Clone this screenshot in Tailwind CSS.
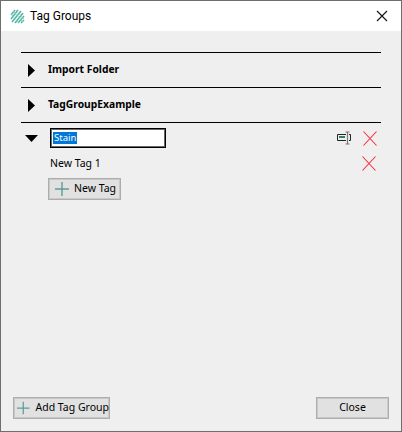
<!DOCTYPE html>
<html lang="en">
<head>
  <meta charset="UTF-8">
  <title>Tag Groups</title>
  <script src="https://cdn.jsdelivr.net/npm/@tailwindcss/browser@4"></script>
</head>
<body class="bg-[#efefef]">
  <div class="w-[402px] h-[432px] flex flex-col border border-[#6e6e6e] font-['Noto_Sans',sans-serif] text-[11px] text-black overflow-hidden">
    <!-- Title bar -->
    <div class="h-[30px] shrink-0 bg-white flex items-center pl-[9px] pr-[13px]">
      <svg class="w-[15px] h-[15px] mr-[5px]" viewBox="0 0 15 15" fill="none" stroke="#4fb3a0" stroke-width="1.5">
        <path d="M1 6 L5 1 M1 10 L8 1 M2 13 L11 2 M5 14 L13 4 M8 14 L14 7 M11 14 L14 11"/>
        <path d="M3 2 L13 13 M6 1 L14 10 M1 5 L9 14" stroke="#8fd3c5" stroke-width="0.8"/>
      </svg>
      <span class="text-[12px] font-['Roboto',sans-serif] flex-1">Tag Groups</span>
      <svg class="w-[12px] h-[12px]" viewBox="0 0 12 12" stroke="#111" stroke-width="1.1"><path d="M1 1 L11 11 M11 1 L1 11"/></svg>
    </div>

    <!-- Body -->
    <div class="flex-1 flex flex-col px-[20px] pt-[21px] pb-[12px]">
      <div class="flex-1">
        <div class="h-[35px] border-t border-black flex items-center pl-[7px]">
          <svg class="w-[7px] h-[13px] mr-[13px]" viewBox="0 0 7 13"><path d="M0 0 L7 6.5 L0 13 Z"/></svg>
          <span class="font-bold text-[10.3px]">Import Folder</span>
        </div>
        <div class="h-[35px] border-t border-black flex items-center pl-[7px]">
          <svg class="w-[7px] h-[13px] mr-[13px]" viewBox="0 0 7 13"><path d="M0 0 L7 6.5 L0 13 Z"/></svg>
          <span class="font-bold text-[10.3px]">TagGroupExample</span>
        </div>
        <div class="border-t border-black">
          <!-- Expanded group -->
          <div class="flex items-center h-[30px] pl-[4px]">
            <svg class="w-[13px] h-[7px] mr-[12px]" viewBox="0 0 13 7"><path d="M0 0 L13 0 L6.5 7 Z"/></svg>
            <div class="w-[116px] h-[20px] border border-black shadow-[inset_0_0_0_1px_#666] bg-white flex items-center pl-[2px]">
              <span class="bg-[#0078d7] text-white leading-[12px] h-[12px] text-[9.5px] px-[1px]">Stain</span>
            </div>
            <svg class="w-[15px] h-[14px] ml-[170px]" viewBox="0 0 15 14" fill="none">
              <path d="M10 3.5 H1.5 V9.5 H10 M13 3.5 H14.5 V9.5 H13" stroke="#222"/>
              <rect x="3" y="5" width="6" height="2" fill="#2f7f70"/>
              <path d="M9.5 1 H13.5 M11.5 1 V13 M9.5 13 H13.5" stroke="#777" stroke-width="1.2"/>
            </svg>
            <svg class="w-[14px] h-[15px] ml-[12px]" viewBox="0 0 14 15" stroke="#ff2a3c" stroke-width="1.1"><path d="M0.5 0.5 L13.5 14.5 M13.5 0.5 L0.5 14.5"/></svg>
          </div>
          <div class="flex items-center justify-between h-[20px] pl-[29px] pr-[5px]">
            <span class="text-[10.5px] relative top-[1px]">New Tag 1</span>
            <svg class="w-[14px] h-[15px]" viewBox="0 0 14 15" stroke="#ff2a3c" stroke-width="1.1"><path d="M0.5 0.5 L13.5 14.5 M13.5 0.5 L0.5 14.5"/></svg>
          </div>
          <div class="pl-[27px] pt-[5px]">
            <button class="w-[73px] h-[22px] border border-[#adadad] shadow-[inset_0_0_0_1px_#c9c9c9] bg-[#e1e1e1] flex items-center pl-[6px]">
              <svg class="w-[14px] h-[14px] mr-[5px]" viewBox="0 0 14 14" stroke="#5f9c94" stroke-width="1.4"><path d="M7 0 V14 M0 7 H14"/></svg>
              <span class="text-[10.5px]">New Tag</span>
            </button>
          </div>
        </div>
      </div>

      <!-- Footer buttons -->
      <div class="flex justify-between items-center -ml-[8px] -mr-[8px]">
        <button class="w-[97px] h-[22px] border border-[#adadad] shadow-[inset_0_0_0_1px_#c9c9c9] bg-[#e1e1e1] flex items-center pl-[3px] whitespace-nowrap">
          <svg class="w-[14px] h-[14px] mr-[6px]" viewBox="0 0 14 14" stroke="#5f9c94" stroke-width="1.4"><path d="M7 0 V14 M0 7 H14"/></svg>
          <span class="text-[10.5px]">Add Tag Group</span>
        </button>
        <button class="w-[73px] h-[22px] border border-[#adadad] shadow-[inset_0_0_0_1px_#c9c9c9] bg-[#e1e1e1] text-[10.5px] flex items-center justify-center">Close</button>
      </div>
    </div>
  </div>
</body>
</html>
